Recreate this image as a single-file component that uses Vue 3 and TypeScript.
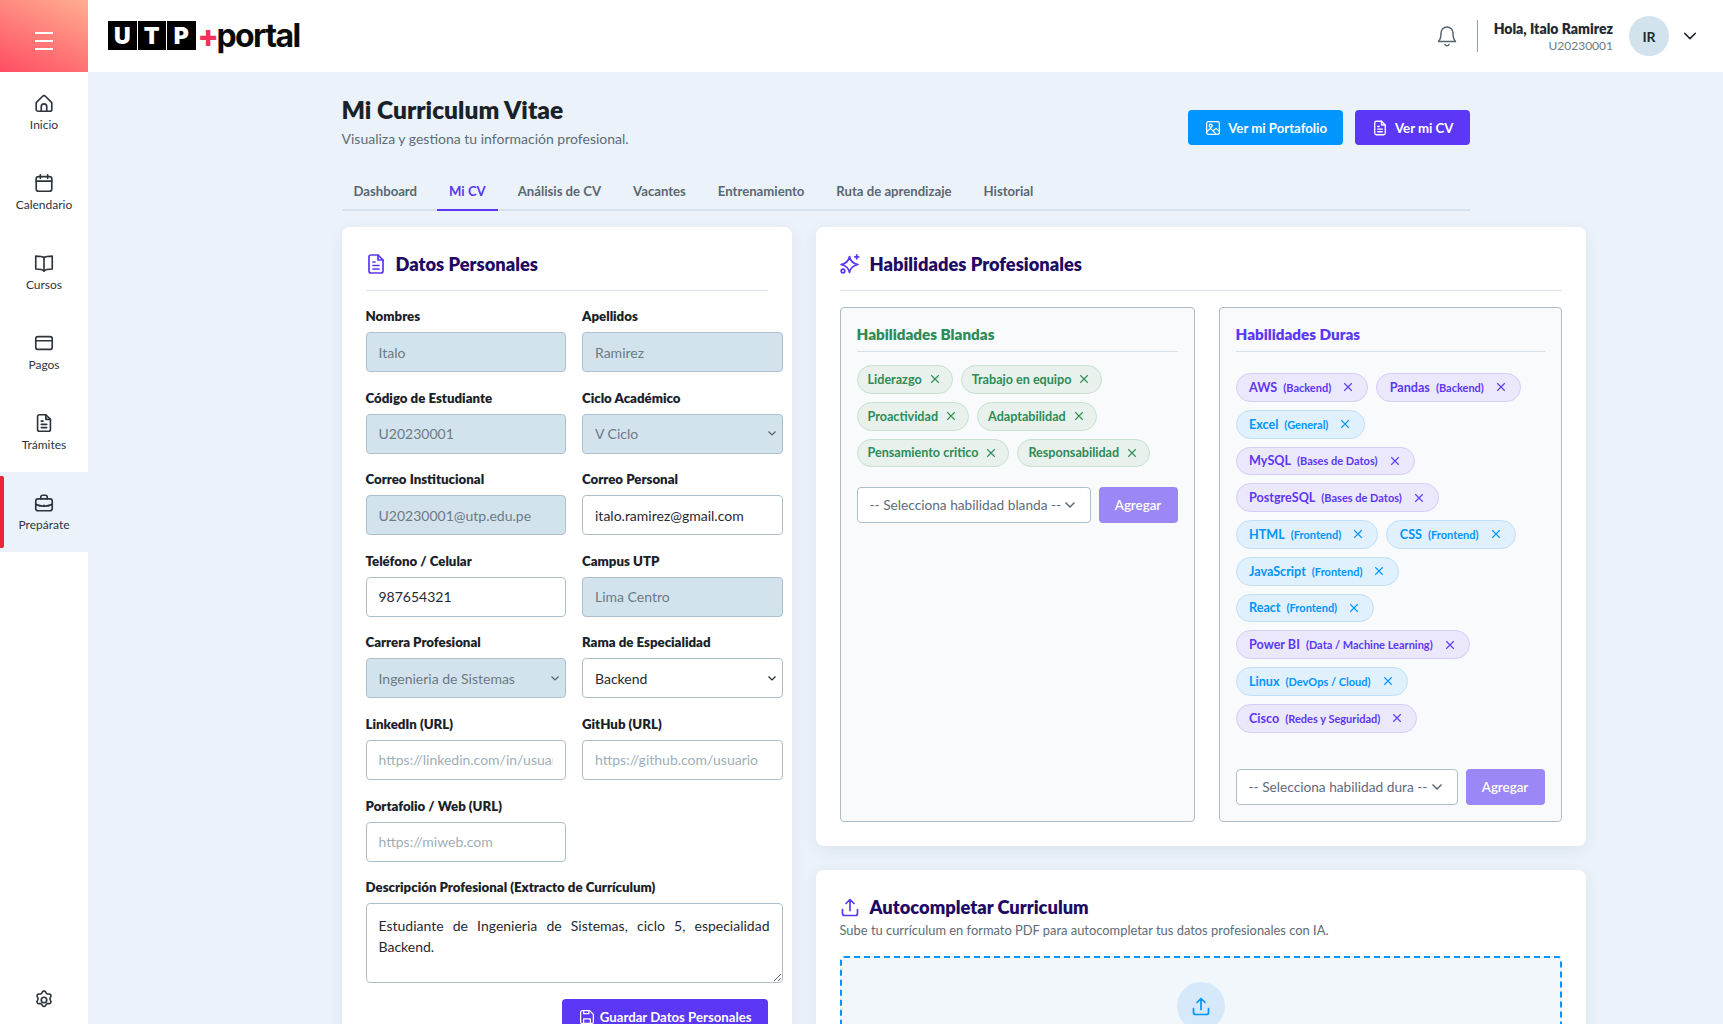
<script setup lang="ts">
interface NavItem {
  label: string;
  icon: string;
  active?: boolean;
}

interface Field {
  label: string;
  kind: 'input' | 'select';
  value?: string;
  placeholder?: string;
  locked?: boolean;
}

interface HardSkill {
  name: string;
  category: string;
  tone: 'purple' | 'blue';
}

const navItems: NavItem[] = [
  { label: 'Inicio', icon: 'home' },
  { label: 'Calendario', icon: 'calendar' },
  { label: 'Cursos', icon: 'book' },
  { label: 'Pagos', icon: 'card' },
  { label: 'Trámites', icon: 'file' },
  { label: 'Prepárate', icon: 'briefcase', active: true },
];

const tabs = ['Dashboard', 'Mi CV', 'Análisis de CV', 'Vacantes', 'Entrenamiento', 'Ruta de aprendizaje', 'Historial'];

const fields: Field[] = [
  { label: 'Nombres', kind: 'input', value: 'Italo', locked: true },
  { label: 'Apellidos', kind: 'input', value: 'Ramirez', locked: true },
  { label: 'Código de Estudiante', kind: 'input', value: 'U20230001', locked: true },
  { label: 'Ciclo Académico', kind: 'select', value: 'V Ciclo', locked: true },
  { label: 'Correo Institucional', kind: 'input', value: 'U20230001@utp.edu.pe', locked: true },
  { label: 'Correo Personal', kind: 'input', value: 'italo.ramirez@gmail.com' },
  { label: 'Teléfono / Celular', kind: 'input', value: '987654321' },
  { label: 'Campus UTP', kind: 'input', value: 'Lima Centro', locked: true },
  { label: 'Carrera Profesional', kind: 'select', value: 'Ingenieria de Sistemas', locked: true },
  { label: 'Rama de Especialidad', kind: 'select', value: 'Backend' },
  { label: 'LinkedIn (URL)', kind: 'input', placeholder: 'https://linkedin.com/in/usuario' },
  { label: 'GitHub (URL)', kind: 'input', placeholder: 'https://github.com/usuario' },
  { label: 'Portafolio / Web (URL)', kind: 'input', placeholder: 'https://miweb.com' },
];

const softSkills = ['Liderazgo', 'Trabajo en equipo', 'Proactividad', 'Adaptabilidad', 'Pensamiento critico', 'Responsabilidad'];

const hardSkills: HardSkill[] = [
  { name: 'AWS', category: 'Backend', tone: 'purple' },
  { name: 'Pandas', category: 'Backend', tone: 'purple' },
  { name: 'Excel', category: 'General', tone: 'blue' },
  { name: 'MySQL', category: 'Bases de Datos', tone: 'purple' },
  { name: 'PostgreSQL', category: 'Bases de Datos', tone: 'purple' },
  { name: 'HTML', category: 'Frontend', tone: 'blue' },
  { name: 'CSS', category: 'Frontend', tone: 'blue' },
  { name: 'JavaScript', category: 'Frontend', tone: 'blue' },
  { name: 'React', category: 'Frontend', tone: 'blue' },
  { name: 'Power BI', category: 'Data / Machine Learning', tone: 'purple' },
  { name: 'Linux', category: 'DevOps / Cloud', tone: 'blue' },
  { name: 'Cisco', category: 'Redes y Seguridad', tone: 'purple' },
];

const description = 'Estudiante de Ingenieria de Sistemas, ciclo 5, especialidad Backend.';
</script>

<template>
  <div class="app">
    <aside class="sidebar">
      <button class="menu-toggle" aria-label="Menu">
        <span></span><span></span><span></span>
      </button>
      <nav class="nav">
        <a v-for="item in navItems" :key="item.label" class="nav-item" :class="{ active: item.active }">
          <svg class="nav-icon" viewBox="0 0 24 24">
            <template v-if="item.icon === 'home'">
              <path d="M3.500 11.500 10.500 4.600a2.100 2.100 0 0 1 3 0l7 6.900V19a2 2 0 0 1-2 2h-13a2 2 0 0 1-2-2z" />
              <path d="M9 21v-5a3 3 0 0 1 6 0v5" />
            </template>
            <template v-else-if="item.icon === 'calendar'">
              <rect x="3.500" y="5" width="17" height="16" rx="2.500" />
              <path d="M3.500 10h17M8 3v4M16 3v4" />
            </template>
            <template v-else-if="item.icon === 'book'">
              <path d="M12 6C10.500 4.800 8 4.500 3 4.500v14c5 0 7.500.5 9 2 1.500-1.500 4-2 9-2v-14c-5 0-7.500.3-9 1.500z" />
              <path d="M12 6v15" />
            </template>
            <template v-else-if="item.icon === 'card'">
              <rect x="3" y="5" width="18" height="14" rx="2.500" />
              <path d="M3 9.500h18" />
            </template>
            <template v-else-if="item.icon === 'file'">
              <path d="M14 3H7a2 2 0 0 0-2 2v14a2 2 0 0 0 2 2h10a2 2 0 0 0 2-2V8z" />
              <path d="M14 3v5h5M9 10h2M9 13.500h6M9 17h6" />
            </template>
            <template v-else>
              <rect x="3" y="7.500" width="18" height="13" rx="2.500" />
              <path d="M8.500 7.500V5.500a2 2 0 0 1 2-2h3a2 2 0 0 1 2 2v2M3 13.500c5.500 2.500 12.500 2.500 18 0M12 14.500v.5" />
            </template>
          </svg>
          <span>{{ item.label }}</span>
        </a>
      </nav>
      <button class="settings" aria-label="Ajustes">
        <svg class="nav-icon" viewBox="0 0 24 24">
          <path d="M10.300 3.200a2 2 0 0 1 3.400 0l.8 1.300a2 2 0 0 0 1.700.9l1.500 0a2 2 0 0 1 1.700 3l-.7 1.300a2 2 0 0 0 0 1.900l.7 1.300a2 2 0 0 1-1.700 3l-1.500 0a2 2 0 0 0-1.700.9l-.8 1.300a2 2 0 0 1-3.400 0l-.8-1.300a2 2 0 0 0-1.700-.9l-1.500 0a2 2 0 0 1-1.700-3l.7-1.300a2 2 0 0 0 0-1.900l-.7-1.300a2 2 0 0 1 1.700-3l1.500 0a2 2 0 0 0 1.700-.9z" />
          <circle cx="12" cy="12" r="3" />
        </svg>
      </button>
    </aside>

    <div class="workspace">
      <header class="topbar">
        <div class="logo">
          <span class="logo-box">U</span>
          <span class="logo-box">T</span>
          <span class="logo-box">P</span>
          <span class="logo-plus">+</span>
          <span class="logo-word">portal</span>
        </div>
        <div class="user-area">
          <svg class="bell" viewBox="0 0 24 24">
            <path d="M12 3a6 6 0 0 0-6 6c0 5-1 7-2.500 8.500h17C19 16 18 14 18 9a6 6 0 0 0-6-6z" />
            <path d="M10 20.500a2.200 2.200 0 0 0 4 0" />
          </svg>
          <div class="user-divider"></div>
          <div class="user-text">
            <strong>Hola, Italo Ramirez</strong>
            <small>U20230001</small>
          </div>
          <div class="avatar">IR</div>
          <svg class="user-chevron" viewBox="0 0 24 24"><path d="m5 8.500 7 7 7-7" /></svg>
        </div>
      </header>

      <main class="main">
        <div class="container">
          <div class="page-head">
            <div>
              <h1>Mi Curriculum Vitae</h1>
              <p>Visualiza y gestiona tu información profesional.</p>
            </div>
            <div class="head-actions">
              <button class="btn btn-blue">
                <svg viewBox="0 0 24 24">
                  <rect x="3.500" y="3.500" width="17" height="17" rx="2.500" />
                  <circle cx="9" cy="9" r="2" />
                  <path d="m3.500 17 5-4.500 8 8M13 15l3-2.500 4.500 4" />
                </svg>
                Ver mi Portafolio
              </button>
              <button class="btn btn-purple">
                <svg viewBox="0 0 24 24">
                  <path d="M14 3H7a2 2 0 0 0-2 2v14a2 2 0 0 0 2 2h10a2 2 0 0 0 2-2V8z" />
                  <path d="M14 3v5h5M9 10h2M9 13.500h6M9 17h6" />
                </svg>
                Ver mi CV
              </button>
            </div>
          </div>

          <div class="tabs">
            <a v-for="tab in tabs" :key="tab" class="tab" :class="{ active: tab === 'Mi CV' }">{{ tab }}</a>
          </div>

          <div class="cv-grid">
            <section class="card">
              <h2 class="card-title">
                <svg viewBox="0 0 24 24">
                  <path d="M14 3H7a2 2 0 0 0-2 2v14a2 2 0 0 0 2 2h10a2 2 0 0 0 2-2V8z" />
                  <path d="M14 3v5h5M9 10h2M9 13.500h6M9 17h6" />
                </svg>
                Datos Personales
              </h2>
              <form class="form-grid" @submit.prevent>
                <label v-for="field in fields" :key="field.label" class="field">
                  <span>{{ field.label }}</span>
                  <select v-if="field.kind === 'select'" class="control" :class="{ locked: field.locked }">
                    <option>{{ field.value }}</option>
                  </select>
                  <input
                    v-else
                    class="control"
                    :class="{ locked: field.locked }"
                    :value="field.value"
                    :placeholder="field.placeholder"
                  >
                </label>
                <label class="field wide">
                  <span>Descripción Profesional (Extracto de Currículum)</span>
                  <textarea class="control textarea" :value="description"></textarea>
                </label>
              </form>
              <div class="save-row">
                <button class="btn btn-purple btn-save">
                  <svg viewBox="0 0 24 24">
                    <path d="M6 3.500h9.500l5 5V18.500a2 2 0 0 1-2 2H5.500a2 2 0 0 1-2-2V6a2.500 2.500 0 0 1 2.500-2.500z" />
                    <path d="M7.500 20.500v-6h9v6M7.500 3.500v4h7v-4" />
                  </svg>
                  Guardar Datos Personales
                </button>
              </div>
            </section>

            <div class="right-col">
              <section class="card">
                <h2 class="card-title">
                  <svg viewBox="0 0 24 24">
                    <path d="M11.500 4.500c.9 4.800 3 7 8.500 8-5.500 1-7.600 3.200-8.500 8-.9-4.800-3-7-8.500-8 5.500-1 7.600-3.200 8.500-8z" />
                    <path d="M18.700 2.800v4M16.700 4.800h4" />
                    <circle cx="5" cy="19" r="1.800" />
                  </svg>
                  Habilidades Profesionales
                </h2>
                <div class="skills-grid">
                  <div class="skill-box">
                    <h3 class="soft-title">Habilidades Blandas</h3>
                    <div class="chips">
                      <span v-for="skill in softSkills" :key="skill" class="chip green">
                        <b>{{ skill }}</b>
                        <svg viewBox="0 0 12 12"><path d="m1.500 1.500 9 9m0-9-9 9" /></svg>
                      </span>
                    </div>
                    <div class="add-row">
                      <select class="skill-select"><option>-- Selecciona habilidad blanda --</option></select>
                      <button class="add-btn">Agregar</button>
                    </div>
                  </div>
                  <div class="skill-box">
                    <h3 class="hard-title">Habilidades Duras</h3>
                    <div class="chips hard-chips">
                      <span v-for="skill in hardSkills" :key="skill.name" class="chip" :class="skill.tone">
                        <b>{{ skill.name }}</b>
                        <em>({{ skill.category }})</em>
                        <svg viewBox="0 0 12 12"><path d="m1.500 1.500 9 9m0-9-9 9" /></svg>
                      </span>
                    </div>
                    <div class="add-row">
                      <select class="skill-select"><option>-- Selecciona habilidad dura --</option></select>
                      <button class="add-btn">Agregar</button>
                    </div>
                  </div>
                </div>
              </section>

              <section class="card">
                <h2 class="card-title plain">
                  <svg viewBox="0 0 24 24">
                    <path d="M12 15.500V4.500M8 8.500l4-4 4 4M4.500 14.500v4a2 2 0 0 0 2 2h11a2 2 0 0 0 2-2v-4" />
                  </svg>
                  Autocompletar Curriculum
                </h2>
                <p class="card-note">Sube tu currículum en formato PDF para autocompletar tus datos profesionales con IA.</p>
                <div class="dropzone">
                  <div class="drop-circle">
                    <svg viewBox="0 0 24 24">
                      <path d="M12 15.500V4.500M8 8.500l4-4 4 4M4.500 14.500v4a2 2 0 0 0 2 2h11a2 2 0 0 0 2-2v-4" />
                    </svg>
                  </div>
                </div>
              </section>
            </div>
          </div>
        </div>
      </main>
    </div>
  </div>
</template>

<style scoped>
.app {
  display: flex;
  height: 100vh;
  overflow: hidden;
  background: #ebf2f9;
  font-family: Lato, "Liberation Sans", sans-serif;
  color: #1f2a33;
}

.sidebar {
  display: flex;
  flex-direction: column;
  flex: 0 0 88px;
  background: #fff;
}

.menu-toggle {
  display: flex;
  flex-direction: column;
  align-items: center;
  gap: 6px;
  height: 72px;
  padding: 32px 0 0;
  border: 0;
  background: linear-gradient(205deg, #ffae90 0%, #ff4d63 100%);
}

.menu-toggle span {
  width: 18px;
  height: 2px;
  background: #fff;
}

.nav {
  flex: 1;
}

.nav-item {
  position: relative;
  display: flex;
  flex-direction: column;
  align-items: center;
  gap: 3px;
  height: 80px;
  padding-top: 20px;
  box-sizing: border-box;
  font-size: 12px;
  line-height: 16px;
  color: #2c353d;
}

.nav-item.active {
  background: #ebf2f9;
}

.nav-item.active::before {
  content: "";
  position: absolute;
  left: 0;
  top: 4px;
  bottom: 4px;
  width: 4px;
  border-radius: 0 2px 2px 0;
  background: #ee2536;
}

.nav-icon {
  width: 22px;
  height: 22px;
  fill: none;
  stroke: #2c353d;
  stroke-width: 1.800;
  stroke-linecap: round;
  stroke-linejoin: round;
}

.settings {
  display: flex;
  justify-content: center;
  padding: 0 0 13px;
  border: 0;
  background: none;
}

.workspace {
  display: flex;
  flex-direction: column;
  flex: 1;
  min-width: 0;
}

.topbar {
  display: flex;
  flex: 0 0 72px;
  align-items: center;
  justify-content: space-between;
  padding: 0 24px 0 20px;
  background: #fff;
}

.logo {
  display: flex;
  align-items: center;
  margin-top: -1px;
}

.logo-box {
  display: flex;
  align-items: center;
  justify-content: center;
  width: 28.500px;
  height: 29px;
  margin-right: 1px;
  background: #000;
  color: #fff;
  font-family: Inter, sans-serif;
  font-size: 23px;
  font-weight: 900;
}

.logo-plus {
  margin-left: 1px;
  width: 19px;
  font-family: Inter, sans-serif;
  font-size: 31px;
  font-weight: 800;
  line-height: 29px;
  color: #f5305a;
  text-align: center;
}

.logo-word {
  font-family: Inter, sans-serif;
  font-size: 32px;
  font-weight: 700;
  letter-spacing: -1.600px;
  line-height: 29px;
  color: #0b0b0b;
}

.user-area {
  display: flex;
  align-items: center;
}

.bell {
  width: 24px;
  height: 24px;
  fill: none;
  stroke: #56646e;
  stroke-width: 1.500;
  stroke-linecap: round;
  stroke-linejoin: round;
}

.user-divider {
  width: 1px;
  height: 32px;
  margin: 0 16px 0 18px;
  background: #8fa0ac;
}

.user-text {
  display: flex;
  flex-direction: column;
  align-items: flex-end;
  margin-right: 16px;
  padding-top: 1px;
  line-height: 17px;
}

.user-text strong {
  font-size: 14px;
  font-weight: 800;
}

.user-text small {
  font-size: 12px;
  color: #6c7a85;
}

.avatar {
  display: flex;
  align-items: center;
  justify-content: center;
  width: 40px;
  height: 40px;
  border-radius: 50%;
  background: #d3e3ee;
  font-size: 14px;
  font-weight: 700;
}

.user-chevron {
  width: 18px;
  height: 18px;
  margin-left: 12px;
  fill: none;
  stroke: #1f2a33;
  stroke-width: 2;
  stroke-linecap: round;
  stroke-linejoin: round;
}

.main {
  flex: 1;
  min-height: 0;
  overflow: hidden;
}

.container {
  width: 1128px;
  margin: 0 auto;
  padding-top: 24px;
}

.page-head {
  display: flex;
  justify-content: space-between;
  align-items: flex-start;
}

.page-head h1 {
  margin: 0;
  font-size: 24.500px;
  font-weight: 800;
  line-height: 27px;
  color: #1a2229;
}

.page-head p {
  margin: 6px 0 0;
  font-size: 14px;
  line-height: 20px;
  color: #5e6c77;
}

.head-actions {
  display: flex;
  gap: 12px;
  margin-top: 14px;
}

.btn {
  display: inline-flex;
  align-items: center;
  gap: 6px;
  height: 35px;
  padding: 0 16px;
  border: 0;
  border-radius: 4px;
  color: #fff;
  font-family: inherit;
  font-size: 13.200px;
  font-weight: 700;
}

.btn svg {
  width: 18px;
  height: 18px;
  fill: none;
  stroke: currentColor;
  stroke-width: 1.700;
  stroke-linecap: round;
  stroke-linejoin: round;
}

.btn-blue {
  background: #0095ff;
}

.btn-purple {
  background: #5c37f5;
}

.tabs {
  display: flex;
  gap: 8px;
  margin-top: 25px;
  border-bottom: 2px solid #d5e2ee;
}

.tab {
  margin-bottom: -2px;
  padding: 7px 12px 8px;
  border-bottom: 2px solid transparent;
  font-size: 13.150px;
  font-weight: 700;
  line-height: 20px;
  color: #5a6873;
}

.tab.active {
  border-bottom-color: #5c37f5;
  color: #5c37f5;
}

.cv-grid {
  display: grid;
  grid-template-columns: 450px 770px;
  gap: 24px;
  width: 1244px;
  margin-top: 16px;
  align-items: start;
}

.right-col {
  display: flex;
  flex-direction: column;
  gap: 24px;
}

.card {
  padding: 24px;
  border-radius: 8px;
  background: #fff;
  box-shadow: 0 4px 16px rgba(40, 70, 110, 0.08);
}

.card-title {
  display: flex;
  align-items: center;
  gap: 8px;
  height: 26px;
  margin: 0 0 16px;
  padding-bottom: 13px;
  border-bottom: 1px solid #d5e2ee;
  font-size: 18.300px;
  font-weight: 800;
  line-height: 26px;
  color: #1f0a63;
  box-sizing: content-box;
}

.card-title svg {
  width: 24px;
  height: 24px;
  margin-left: -2px;
  fill: none;
  stroke: #5c37f5;
  stroke-width: 1.700;
  stroke-linecap: round;
  stroke-linejoin: round;
}

.card-title.plain {
  height: 26px;
  margin: 0 0 1px;
  padding: 0;
  border: 0;
}

.form-grid {
  display: grid;
  grid-template-columns: 200.500px 200.500px;
  gap: 0 16px;
  width: 417px;
}

.field {
  display: flex;
  flex-direction: column;
  height: 81.600px;
}

.field > span {
  font-size: 13.250px;
  font-weight: 800;
  line-height: 18px;
  margin-bottom: 7px;
  color: #1a2229;
}

.control {
  box-sizing: border-box;
  width: 100%;
  height: 40px;
  padding: 0 12px;
  border: 1px solid #aebfcc;
  border-radius: 4px;
  background: #fff;
  color: #1f2a33;
  font-family: inherit;
  font-size: 14px;
  outline: none;
}

select.control {
  appearance: none;
  background: #fff url("data:image/svg+xml,%3Csvg xmlns='http://www.w3.org/2000/svg' viewBox='0 0 8 5'%3E%3Cpath d='m.5.5 3.500 3.500 3.500-3.500' fill='none' stroke='%231f2a33' stroke-width='1.200'/%3E%3C/svg%3E") no-repeat right 6px center / 8px;
}

.control::placeholder {
  color: #a0aeb8;
}

.control.locked {
  background-color: #d3e3ed;
  color: #6c7a85;
}

select.control.locked {
  background-image: url("data:image/svg+xml,%3Csvg xmlns='http://www.w3.org/2000/svg' viewBox='0 0 8 5'%3E%3Cpath d='m.5.5 3.500 3.500 3.500-3.500' fill='none' stroke='%23566470' stroke-width='1.200'/%3E%3C/svg%3E");
}

.field.wide {
  grid-column: 1 / -1;
  height: auto;
}

.textarea {
  height: 80px;
  padding: 11px 12px;
  line-height: 21px;
  text-align: justify;
}

.save-row {
  display: flex;
  justify-content: flex-end;
  margin-top: 16px;
}

.btn-save {
  height: 36px;
  gap: 4px;
}

.skills-grid {
  display: grid;
  grid-template-columns: 355px 343px;
  gap: 24px;
}

.skill-box {
  display: flex;
  flex-direction: column;
  height: 515px;
  box-sizing: border-box;
  padding: 16px;
  border: 1px solid #aebdc9;
  border-radius: 4px;
  background: #f8fafc;
}

.skill-box h3 {
  margin: 0 0 13px;
  padding-bottom: 7px;
  border-bottom: 1px solid #d5e2ee;
  font-size: 15.200px;
  font-weight: 800;
  line-height: 20px;
}

.soft-title {
  color: #2e8b57;
}

.hard-title {
  color: #5c37f5;
}

.chips {
  display: flex;
  flex-wrap: wrap;
  gap: 8px;
  padding-bottom: 19.750px;
}

.hard-chips {
  padding: 8px 0 36.500px;
}

.chip {
  display: inline-flex;
  align-items: center;
  box-sizing: border-box;
  height: 28.750px;
  padding: 0 12px 0 10px;
  border: 1px solid;
  border-radius: 15px;
  font-size: 12.600px;
  white-space: nowrap;
}

.chip b {
  font-weight: 700;
}

.chip em {
  margin-left: 6px;
  font-size: 11px;
  font-style: normal;
  font-weight: 700;
}

.chip svg {
  width: 10px;
  height: 10px;
  margin-left: 8px;
  fill: none;
  stroke: currentColor;
  stroke-width: 1.300;
}

.chip.green {
  background: #e8f1ec;
  border-color: #c8e0d2;
  color: #2e8b57;
}

.chip.purple {
  padding: 0 14px 0 12.500px;
  background: #ece8fb;
  border-color: #d6ccf8;
  color: #5c37f5;
}

.chip.blue {
  padding: 0 14px 0 12.500px;
  background: #e1f0fd;
  border-color: #bfe0fb;
  color: #0095ff;
}

.chip.purple svg,
.chip.blue svg {
  margin-left: 12px;
}

.add-row {
  display: flex;
  gap: 8px;
}

.skill-select {
  flex: 1;
  min-width: 0;
  height: 36px;
  padding: 0 12px 2px;
  border: 1px solid #aebfcc;
  border-radius: 4px;
  background: #fff url("data:image/svg+xml,%3Csvg xmlns='http://www.w3.org/2000/svg' viewBox='0 0 12 12'%3E%3Cpath d='m1.500 3.500 4.500 4.500 4.500-4.500' fill='none' stroke='%23556370' stroke-width='1.400'/%3E%3C/svg%3E") no-repeat right 14px center / 12px;
  appearance: none;
  color: #5e6c77;
  font-family: inherit;
  font-size: 13.700px;
}

.add-btn {
  flex: 0 0 79px;
  height: 36px;
  border: 0;
  border-radius: 4px;
  background: #9b87f5;
  color: #fff;
  font-family: inherit;
  font-size: 13.333px;
  font-weight: 600;
}

.card-note {
  margin: 0;
  font-size: 12.900px;
  line-height: 18px;
  color: #5e6c77;
}

.dropzone {
  display: flex;
  justify-content: center;
  height: 220px;
  margin-top: 17px;
  padding-top: 24px;
  box-sizing: border-box;
  border: 2px dashed #0095ff;
  border-radius: 4px;
  background: #f2f7fb;
}

.drop-circle {
  display: flex;
  align-items: center;
  justify-content: center;
  width: 48px;
  height: 48px;
  border-radius: 50%;
  background: #d6e9fb;
}

.drop-circle svg {
  width: 24px;
  height: 24px;
  fill: none;
  stroke: #0095ff;
  stroke-width: 1.700;
  stroke-linecap: round;
  stroke-linejoin: round;
}
</style>
